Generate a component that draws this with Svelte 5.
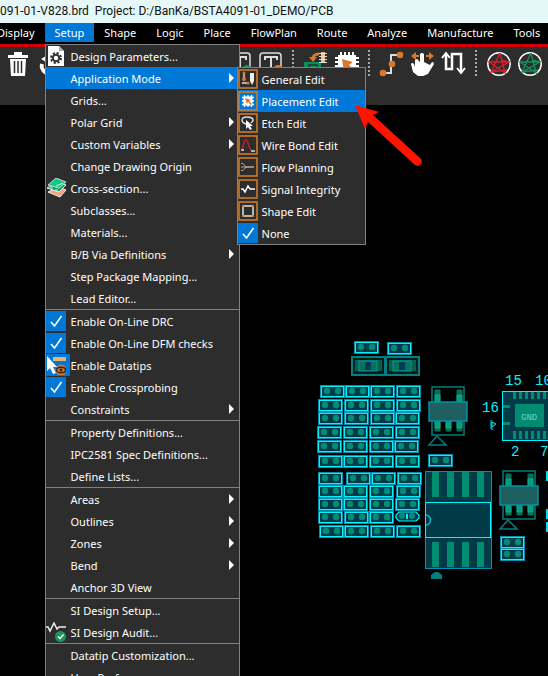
<script>
  const menus = ['Display', 'Setup', 'Shape', 'Logic', 'Place', 'FlowPlan', 'Route', 'Analyze', 'Manufacture', 'Tools'];

  const setupMenu = [
    [
      { text: 'Design Parameters...', icon: 'params' },
      { text: 'Application Mode', sub: true, open: true },
      { text: 'Grids...' },
      { text: 'Polar Grid', sub: true },
      { text: 'Custom Variables', sub: true },
      { text: 'Change Drawing Origin' },
      { text: 'Cross-section...', icon: 'layers' },
      { text: 'Subclasses...' },
      { text: 'Materials...' },
      { text: 'B/B Via Definitions', sub: true },
      { text: 'Step Package Mapping...' },
      { text: 'Lead Editor...' }
    ],
    [
      { text: 'Enable On-Line DRC', icon: 'check' },
      { text: 'Enable On-Line DFM checks', icon: 'check' },
      { text: 'Enable Datatips', icon: 'datatips' },
      { text: 'Enable Crossprobing', icon: 'check' },
      { text: 'Constraints', sub: true }
    ],
    [{ text: 'Property Definitions...' }, { text: 'IPC2581 Spec Definitions...' }, { text: 'Define Lists...' }],
    [
      { text: 'Areas', sub: true },
      { text: 'Outlines', sub: true },
      { text: 'Zones', sub: true },
      { text: 'Bend', sub: true },
      { text: 'Anchor 3D View' }
    ],
    [{ text: 'SI Design Setup...' }, { text: 'SI Design Audit...', icon: 'audit' }],
    [{ text: 'Datatip Customization...' }, { text: 'User Preferences...' }]
  ];

  const modes = [
    { text: 'General Edit', icon: 'general' },
    { text: 'Placement Edit', icon: 'placement', active: true },
    { text: 'Etch Edit', icon: 'etch' },
    { text: 'Wire Bond Edit', icon: 'wire' },
    { text: 'Flow Planning', icon: 'flow' },
    { text: 'Signal Integrity', icon: 'signal' },
    { text: 'Shape Edit', icon: 'shape' },
    { text: 'None', icon: 'check' }
  ];

  const tools = [
    ['textAdd', 'textEdit'],
    ['save', 'chip'],
    ['route', 'slide', 'meander'],
    ['ratsRed', 'ratsGreen']
  ];

  const rows = [
    [385, 320, 345, 370, 396],
    [399, 318, 344, 370, 396],
    [412, 318, 344, 370, 395],
    [426, 317, 343, 369, 395],
    [440, 317, 343, 369, 394],
    [455, 318, 343, 369, 395],
    [472, 318, 346, 371, 397],
    [485, 318, 343, 369, 396],
    [498, 318, 343, 369, 395],
    [511, 318, 344, 369],
    [525, 319, 344, 370, 396]
  ];
  const parts = [
    [354, 341], [387, 342], [428, 454], [500, 536], [500, 548],
    ...rows.flatMap(([y, ...xs]) => xs.map((x) => [x, y]))
  ];
</script>

{#snippet toolIcon(name)}
  <svg width="26" height="26" viewBox="0 0 26 26" fill="none" aria-hidden="true">
    {#if name === 'trash'}
      <path d="M3 4h20v3H3zM9 1h8v3H9z" fill="#fff" />
      <path d="M5 8h16l-1 17H6z" fill="#fff" />
      <path d="M9.500 10v12M13 10v12M16.500 10v12" stroke="#2d2d2d" stroke-width="1.500" />
    {:else if name === 'undo'}
      <path d="M6 13c-1 4 0 6 4 9" stroke="#fff" stroke-width="4" />
      <path d="M5 8l8-5v10z" fill="#fff" />
    {:else if name === 'textAdd' || name === 'textEdit'}
      <rect x="2" y="2" width="21" height="22" rx="3" stroke="#ddd" stroke-width="1.500" />
      <path d="M7 9V6h12v3M13 6v13M10 19h6" stroke="#ddd" stroke-width="2" />
      <circle cx="20" cy="18" r="4" fill={name === 'textAdd' ? '#14905a' : '#d9782d'} />
    {:else if name === 'save'}
      <path d="M1 11h17v14H1z" fill="#0a8f5b" />
      <path d="M6 14h8v4H6z" stroke="#2d2d2d" stroke-width="1.500" />
      <path d="M10 8c0-4 2-5 6-5" stroke="#d9782d" stroke-width="3" />
      <path d="M6 6h8l-4 5z" fill="#d9782d" />
      <rect x="18" y="1" width="4" height="11" fill="#e8c48a" />
      <path d="M16 2.500h8M16 5.500h8M16 8.500h8M16 11.500h8" stroke="#ddd" />
    {:else if name === 'chip'}
      <path d="M7 1v24M11 1v24M15 1v24M19 1v24M1 7h24M1 11h24M1 15h24M1 19h24" stroke="#fff" stroke-width="2" />
      <rect x="4" y="4" width="18" height="18" fill="#fff" />
      <path d="M8 8l11 3-4 3 6 6-3 3-6-6-2 4z" fill="#d9782d" />
    {:else if name === 'route'}
      <path d="M5 22h7V13h0V4h8" stroke="#ddd" stroke-width="2" />
      <circle cx="4" cy="22" r="3.300" fill="#d9782d" /><circle cx="13" cy="13" r="3.300" fill="#d9782d" /><circle cx="21" cy="4" r="3.300" fill="#d9782d" />
    {:else if name === 'slide'}
      <path d="M4 5h5M16 5h6" stroke="#d9782d" stroke-width="2" />
      <path d="M6 1v8L1 5zM19 1v8l5-4z" fill="#d9782d" />
      <path d="M10 3q2-2 4 0v8l6 3 2-3q2 0 2 2l-6 10-5 2H8l-5-4-2-8q1-2 3 0l1 3 0-7q2-2 3 0l2 2z" fill="#fff" />
    {:else if name === 'meander'}
      <path d="M5 3v15h6V3h9v18" stroke="#fff" stroke-width="2.500" />
      <path d="M1 7l4-5 4 5M16 17l4 5 4-5" stroke="#fff" stroke-width="2" />
    {:else}
      <circle cx="13" cy="13" r="11.200" stroke="#fff" stroke-width="1.500" />
      <path d="M14 2l5 20L3 11h20L5 21 14 2M3 11l16 11M23 11l-8-2M5 21l16-2" stroke={name === 'ratsRed' ? '#d4202a' : '#14905a'} stroke-width="1.400" />
    {/if}
  </svg>
{/snippet}

{#snippet menuIcon(name)}
  <svg width="20" height="20" viewBox="0 0 20 20" fill="none" aria-hidden="true">
    {#if name === 'check'}
      <rect width="20" height="20" fill="#0078d7" />
      <path d="M5 11l3.500 4L15.500 5" stroke="#fff" stroke-width="1.600" />
    {:else if name === 'params'}
      <path d="M2 0h11l5 5v15H2z" fill="#fff" />
      <path d="M13 0v5h5z" fill="#aaa" />
      <circle cx="10" cy="12" r="5" stroke="#333" stroke-width="2" stroke-dasharray="2.200 1.727" />
      <circle cx="10" cy="12" r="3.200" stroke="#333" stroke-width="2" />
    {:else if name === 'layers'}
      <path d="M2 14l12 5 6-7-7-3z" fill="#f0a878" stroke="#eee" />
      <path d="M1 10l12 4 7-7-8-3z" fill="#0c9e68" stroke="#eee" />
      <path d="M2 7l8-7 10 4-7 6z" fill="#16c784" stroke="#eee" stroke-width=".8" />
      <path d="M4 10h3M9 12h3M10 8l7-3" stroke="#baffdf" />
    {:else if name === 'datatips'}
      <rect x="7" y="2" width="13" height="4" fill="#e8b470" />
      <circle cx="15" cy="15" r="5.500" fill="#d9782d" />
      <ellipse cx="15" cy="15" rx="4.500" ry="2.800" stroke="#3a2614" stroke-width="1.400" />
      <circle cx="15" cy="15" r="1.500" fill="#3a2614" />
      <path d="M1 1v15l3-3 3 6 3-1-3-6h4z" fill="#fff" />
    {:else if name === 'audit'}
      <path d="M0 5h2l2 4L8 1l3 6 2-2h7" stroke="#eee" stroke-width="1.500" />
      <circle cx="14.500" cy="14.500" r="5.500" fill="#149a5a" />
      <path d="M12 14.500l2 2 3.500-4" stroke="#fff" stroke-width="1.400" />
    {:else}
      <rect x="1" y="1" width="18" height="18" stroke="#d07a26" stroke-width="1.600" />
      {#if name === 'general'}
        <path d="M6 5v7M4 14h7" stroke="#ddd" stroke-width="1.500" />
        <circle cx="6" cy="10" r="2" fill="#d9782d" /><circle cx="6" cy="4" r="1.500" fill="#d9782d" /><circle cx="10" cy="14" r="1.500" fill="#d9782d" />
        <path d="M12 4h4v8l-2 4-2-4z" fill="#eee" />
      {:else if name === 'placement'}
        <path d="M6.500 4v12M10 4v12M13.500 4v12M4 6.500h12M4 10h12M4 13.500h12" stroke="#fff" stroke-width="1.300" />
        <rect x="5.500" y="5.500" width="9" height="9" fill="#fff" />
        <path d="M7 7l6 2-2 1 3 3-1 1-3-3-1 2z" fill="#d9782d" />
      {:else if name === 'etch'}
        <path d="M8 11C2 9 3 4 9 4s8 3 4 6" stroke="#ddd" stroke-width="1.400" />
        <path d="M8 7v9l2-2 2 3 2-1-2-3h3z" fill="#fff" />
      {:else if name === 'wire'}
        <path d="M4 14C6 12 5 5 8 5s2 10 6 10" stroke="#c4202a" stroke-width="1.400" />
        <path d="M3 15h3M13 16h4" stroke="#ddd" stroke-width="1.500" />
      {:else if name === 'flow'}
        <path d="M3 6.500h2l3 3.500-3 3.500H3M3 10h6" stroke="#aaa" />
        <path d="M8 10h8" stroke="#c9a878" stroke-width="1.500" />
      {:else if name === 'signal'}
        <path d="M3 10h2l2 3 3-6 2 3h5" stroke="#fff" stroke-width="1.500" />
      {:else}
        <rect x="5" y="5" width="10" height="10" stroke="#eee" stroke-width="1.400" />
        <path d="M4 5h2M14 5h2M4 15h2M14 15h2" stroke="#d9782d" stroke-width="2" />
      {/if}
    {/if}
  </svg>
{/snippet}

{#snippet sot(x, y)}
  <g transform="translate({x} {y})">
    <rect x="4" y="1" width="32" height="48" fill="none" stroke="#008080" stroke-width="1.500" />
    <path d="M7 4h5v12H7zM29 4h5v12h-5zM7 35h5v10H7zM18 35h5v10h-5zM29 35h5v10h-5z" fill="#087050" stroke="#087050" stroke-linejoin="round" />
    <path d="M7 9h5v8H7zM29 9h5v8h-5zM7 34h5v8H7zM18 34h5v8h-5zM29 34h5v8h-5z" fill="#0b9a78" stroke="#00b6a0" stroke-width=".8" />
    <rect x="1" y="16" width="38" height="19" fill="#205f60" stroke="#0090a8" stroke-width="1.500" />
    <path d="M1 59l8-9 9 9z" fill="none" stroke="#008080" stroke-width="1.500" />
  </g>
{/snippet}

<div class="window">
  <header class="title">091-01-V828.brd&nbsp; Project: D:/BanKa/BSTA4091-01_DEMO/PCB</header>

  <nav class="menubar" aria-label="Main menu">
    {#each menus as name}
      <div class="entry">
        <button class="top" class:active={name === 'Setup'}>{name}</button>
        {#if name === 'Setup'}
          <div class="menu" role="menu">
            {#each setupMenu as group}
              <div class="group">
                {#each group as item}
                  <div class="row" class:open={item.open}>
                    <button class="item" role="menuitem">
                      <span class="slot" class:lit={item.icon === 'datatips'}>{#if item.icon}{@render menuIcon(item.icon)}{/if}</span>
                      <span class="label">{item.text}</span>
                      {#if item.sub}<span class="caret"></span>{/if}
                    </button>
                    {#if item.open}
                      <div class="menu submenu" role="menu">
                        {#each modes as mode}
                          <div class="row" class:open={mode.active}>
                            <button class="item" role="menuitem">
                              <span class="slot">{@render menuIcon(mode.icon)}</span>
                              <span class="label">{mode.text}</span>
                            </button>
                          </div>
                        {/each}
                      </div>
                    {/if}
                  </div>
                {/each}
              </div>
            {/each}
          </div>
        {/if}
      </div>
    {/each}
  </nav>

  <div class="toolbar" role="toolbar" aria-label="Tools">
    <div class="tools">
      <button class="tool" aria-label="trash">{@render toolIcon('trash')}</button>
      <button class="tool" aria-label="undo">{@render toolIcon('undo')}</button>
    </div>
    <div class="tools right">
      {#each tools as set, i}
        {#if i}<span class="dots"></span>{/if}
        {#each set as name}
          <button class="tool" aria-label={name}>{@render toolIcon(name)}</button>
        {/each}
      {/each}
    </div>
  </div>

  <main class="canvas">
    <svg width="548" height="571" viewBox="0 105 548 571" aria-label="Board layout">
      {#each parts as [x, y]}
        <g transform="translate({x} {y})">
          <rect x=".5" y=".5" width="24" height="12" fill="#003840" stroke="#0090b0" />
          <rect x="1.500" y="1.500" width="22" height="10" fill="#003b47" stroke="#00f4ff" />
          <circle cx="7" cy="6" r="3.200" fill="#008c78" /><circle cx="18" cy="6" r="3.200" fill="#008c78" />
        </g>
      {/each}

      <path d="M399 512h17l3 3v3l-3 3h-17l-3-3v-3z" fill="#003b47" stroke="#00f4ff" stroke-width="1.200" />
      <circle cx="402" cy="516" r="3" fill="#008c78" /><circle cx="412" cy="516" r="3" fill="#008c78" />
      <path d="M407 514v5" stroke="#00f4ff" stroke-width="2" />

      {#each [352, 386] as x}
        <rect {x} y="357" width="33" height="18" fill="#001c1c" stroke="#008080" stroke-width="2" />
        <rect x={x + 3} y="360" width="27" height="11" fill="#07604a" />
        <rect x={x + 7} y="361" width="18" height="10" fill="#08725c" stroke="#0098a0" />
        <rect x={x + 13} y="362" width="6" height="8" fill="#003d58" />
      {/each}

      {@render sot(428, 386)}
      {@render sot(499, 470)}

      <rect x="425.500" y="471.500" width="66" height="97" fill="#003b47" stroke="#0090b0" />
      {#each [432, 447, 462, 477] as x}
        <rect {x} y="472" width="7" height="25" fill="#008c70" /><rect {x} y="542" width="7" height="25" fill="#008c70" />
      {/each}
      <rect x="425.500" y="502.500" width="65" height="35" fill="#003b47" stroke="#00f4ff" />
      <path d="M426 515c6 1 6 9 0 10" fill="none" stroke="#00b4c8" stroke-width="1.500" />
      <path d="M431 579v-4l4-3h3l4 3v4z" fill="#008080" />

      <rect x="502.500" y="391.500" width="60" height="49" fill="#003b47" stroke="#00f4ff" />
      {#each [513, 519, 525, 531, 537, 543] as x}
        <rect {x} y="392" width="3" height="7" fill="#008c78" /><rect {x} y="431" width="3" height="8" fill="#008c78" />
      {/each}
      <path d="M503 406.500h7M503 423.500h7" stroke="#008c78" stroke-width="3" />
      <rect x="515" y="404" width="29" height="23" fill="#008c70" />
      <text x="521" y="420" class="gnd">GND</text>
      <g class="silk">
        <text x="505" y="385">15</text><text x="535" y="385">10</text>
        <text x="482" y="412">16</text><text x="511" y="456">2</text>
        <text x="540" y="456">7</text>
      </g>
      <path d="M491 420v9h2M492 427l4-3-4-2z" fill="none" stroke="#00f4ff" />
      <path d="M547 471v10M547 509v10M547 522v10" stroke="#00e0f0" stroke-width="2" />
    </svg>
    <svg class="pointer" width="548" height="571" viewBox="0 105 548 571" aria-hidden="true">
      <path d="M355 105l24 7-6 3 47 43a4 4 0 0 1-5 7l-47-43-3 7z" fill="#ff1400" />
    </svg>
  </main>
</div>

<style>
  :global(body) {
    background: #000;
    overflow: hidden;
  }
  .window {
    display: flex;
    flex-direction: column;
    height: 100vh;
    overflow: hidden;
    background: #000;
    color: #fff;
    font-family: 'Noto Sans', 'Open Sans', sans-serif;
    font-size: 11px;
  }
  button {
    border: 0;
    padding: 0;
    background: none;
    color: inherit;
    font: inherit;
    white-space: nowrap;
  }
  .title {
    flex: none;
    height: 23px;
    line-height: 23px;
    background: #e5f8f7;
    color: #111;
    font-family: Roboto, sans-serif;
    font-size: 12px;
    white-space: nowrap;
  }
  .menubar {
    flex: none;
    display: flex;
    height: 21px;
    margin-left: -13px;
    border-bottom: 3px solid #d00000;
  }
  .entry {
    position: relative;
  }
  .top {
    display: block;
    height: 19px;
    padding: 0 10px;
    line-height: 19px;
  }
  .active,
  .open > .item {
    background: #0078d7;
  }
  .menu {
    position: absolute;
    z-index: 2;
    top: 21px;
    left: 0;
    width: 193px;
    border: 1px solid #808080;
    background: #2d2d2d;
  }
  .group + .group {
    border-top: 1px solid #808080;
  }
  .row {
    position: relative;
  }
  .item {
    display: flex;
    align-items: center;
    width: 100%;
    height: 22px;
    text-align: left;
  }
  .slot {
    flex: none;
    display: flex;
    align-items: center;
    width: 20px;
    height: 22px;
    margin-right: 5px;
  }
  .lit {
    background: #0078d7;
    width: 24px;
    margin-right: 1px;
  }
  .label {
    flex: 1;
  }
  .caret {
    margin-right: 5px;
    border: 5px solid transparent;
    border-left-color: #fff;
    border-right: 0;
  }
  .submenu {
    top: 0;
    left: 191px;
    width: 127px;
  }
  .submenu .slot {
    margin-right: 4px;
  }
  .toolbar {
    flex: none;
    display: flex;
    height: 58px;
    padding-left: 2px;
    background: #2d2d2d;
  }
  .tools {
    display: flex;
    height: 34px;
  }
  .right {
    margin-left: 160px;
  }
  .tool {
    display: flex;
    align-items: center;
    justify-content: center;
    width: 31px;
    height: 34px;
  }
  .dots {
    width: 2px;
    height: 26px;
    margin: 3px 6px;
    background: repeating-linear-gradient(#aaa 0 2px, transparent 2px 4px);
  }
  .canvas {
    position: relative;
    flex: 1;
    min-height: 0;
  }
  .canvas svg {
    display: block;
  }
  .canvas .pointer {
    position: absolute;
    z-index: 3;
    top: 0;
    left: 0;
    pointer-events: none;
  }
  .gnd {
    fill: #7fd0c0;
    font: 9px 'Liberation Mono', monospace;
  }
  .silk {
    fill: #00f4ff;
    font: 14px 'Liberation Mono', monospace;
  }
</style>
